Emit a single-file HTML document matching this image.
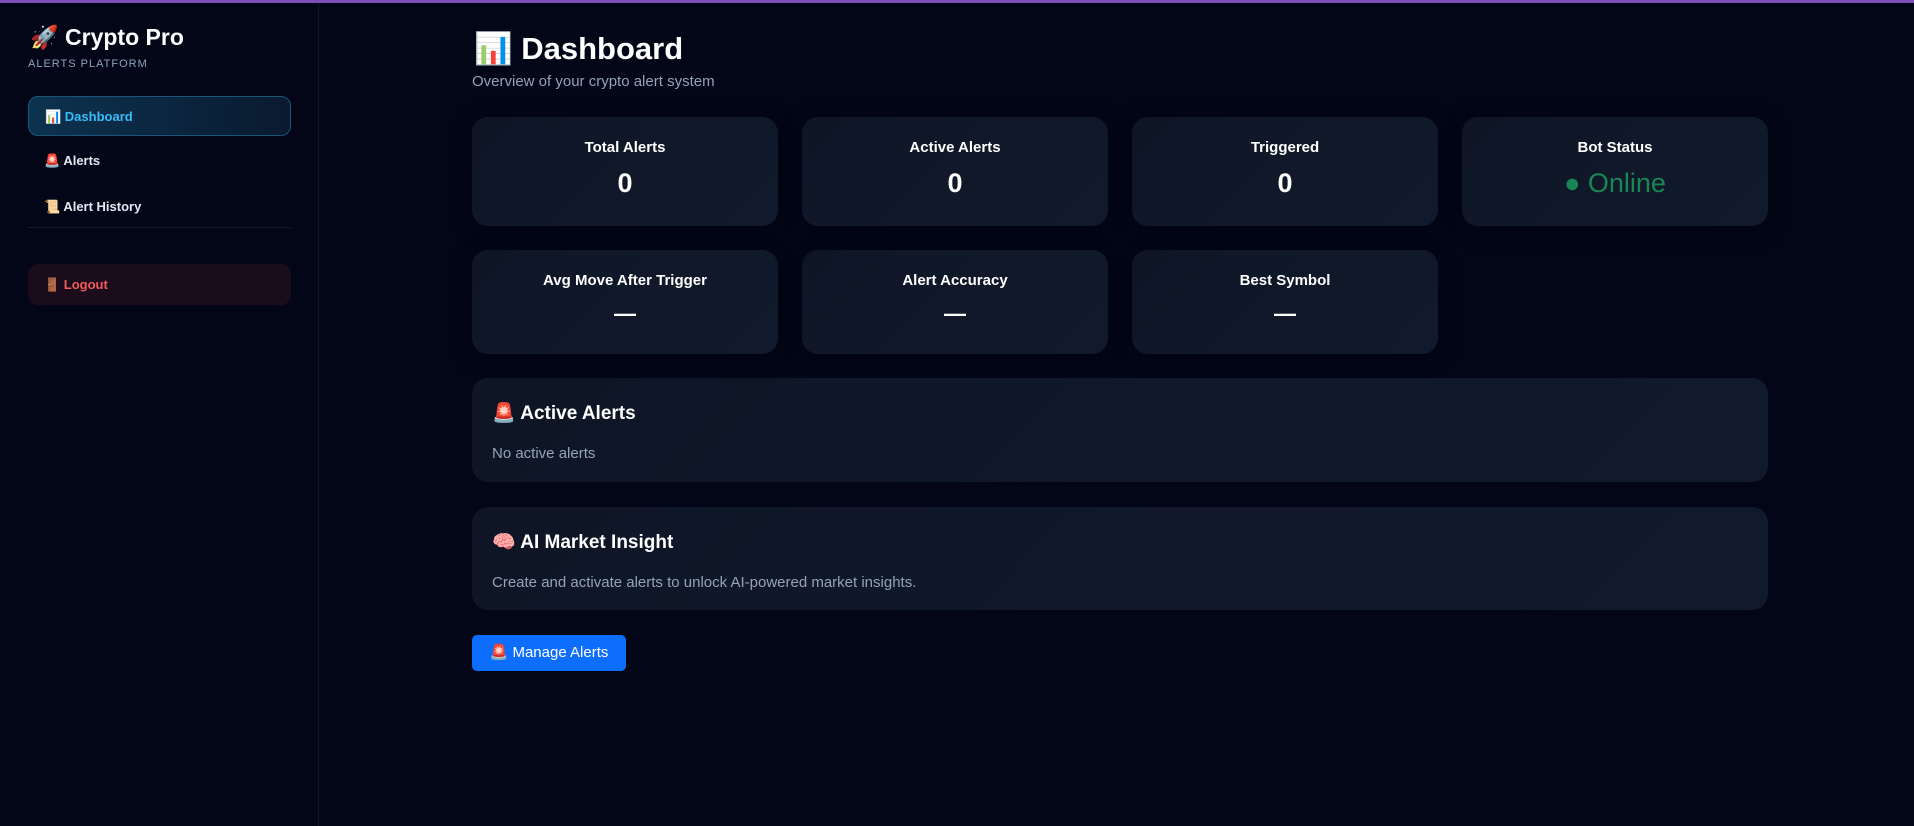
<!DOCTYPE html>
<html><head><meta charset="utf-8"><style>
*{box-sizing:border-box;margin:0;padding:0}
body{width:1914px;height:826px;overflow:hidden;background:#020617;font-family:"Liberation Sans","Noto Sans CJK JP",sans-serif;color:#fff;position:relative}
.top{position:absolute;left:0;top:0;width:1914px;height:3px;background:#7c4dbb}
.side{position:absolute;left:0;top:3px;width:319px;height:823px;background:#030616;border-right:1px solid #0f1524}
.brand{position:absolute;left:30px;top:21px;font-size:23px;font-weight:bold;color:#fff}
.sub{position:absolute;left:28px;top:55px;font-size:11px;letter-spacing:1px;color:#8fa3bd}
.nav{position:absolute;left:28px;width:263px;height:40px;border-radius:10px;font-size:13px;font-weight:bold;padding-left:16px;line-height:40px;color:#e2e8f0}
.act{top:93px;background:linear-gradient(90deg,#0c3350,#0a1a30);border:1px solid #1c5577;color:#38bdf8}
.div{position:absolute;left:28px;top:224px;width:263px;height:1px;background:#141b2b}
.lo{top:261px;background:#1b0c1c;color:#f05a5a;height:41px;line-height:41px}
.h1{position:absolute;left:474px;top:30px;font-size:31px;font-weight:bold}
.h1s{position:absolute;left:472px;top:73px;font-size:15px;color:#94a3b8}
.card{position:absolute;width:306px;border-radius:16px;background:linear-gradient(135deg,#0e1626,#111a2c);text-align:center;box-shadow:0 4px 20px rgba(0,0,0,.4)}
.lab{font-size:15px;font-weight:bold;margin-top:22px}
.val{font-size:27px;font-weight:bold;margin-top:12px}
.panel{position:absolute;left:472px;width:1296px;border-radius:16px;background:linear-gradient(135deg,#0e1626,#111a2c);padding:23px 20px}
.pt{font-size:19px;font-weight:bold}
.pp{font-size:15px;color:#94a3b8;margin-top:20px}
.btn{position:absolute;left:472px;top:635px;width:154px;height:36px;background:#0d6efd;border-radius:5px;font-size:15px;line-height:36px;text-align:center}
</style></head><body>
<div class="top"></div>
<div class="side">
<div class="brand">🚀 Crypto Pro</div>
<div class="sub">ALERTS PLATFORM</div>
<div class="nav act">📊 Dashboard</div>
<div class="nav" style="top:138px">🚨 Alerts</div>
<div class="nav" style="top:184px">📜 Alert History</div>
<div class="div"></div>
<div class="nav lo">🚪 Logout</div>
</div>
<div class="h1">📊 Dashboard</div>
<div class="h1s">Overview of your crypto alert system</div>
<div class="card" style="left:472px;top:117px;height:109px"><div class="lab">Total Alerts</div><div class="val">0</div></div>
<div class="card" style="left:802px;top:117px;height:109px"><div class="lab">Active Alerts</div><div class="val">0</div></div>
<div class="card" style="left:1132px;top:117px;height:109px"><div class="lab">Triggered</div><div class="val">0</div></div>
<div class="card" style="left:1462px;top:117px;height:109px"><div class="lab">Bot Status</div><div class="val" style="color:#198754;font-weight:normal">● Online</div></div>
<div class="card" style="left:472px;top:250px;height:104px"><div class="lab">Avg Move After Trigger</div><div class="val" style="font-size:22px">—</div></div>
<div class="card" style="left:802px;top:250px;height:104px"><div class="lab">Alert Accuracy</div><div class="val" style="font-size:22px">—</div></div>
<div class="card" style="left:1132px;top:250px;height:104px"><div class="lab">Best Symbol</div><div class="val" style="font-size:22px">—</div></div>
<div class="panel" style="top:378px;height:104px"><div class="pt">🚨 Active Alerts</div><div class="pp">No active alerts</div></div>
<div class="panel" style="top:507px;height:103px"><div class="pt">🧠 AI Market Insight</div><div class="pp">Create and activate alerts to unlock AI-powered market insights.</div></div>
<div class="btn">🚨 Manage Alerts</div>
</body></html>
